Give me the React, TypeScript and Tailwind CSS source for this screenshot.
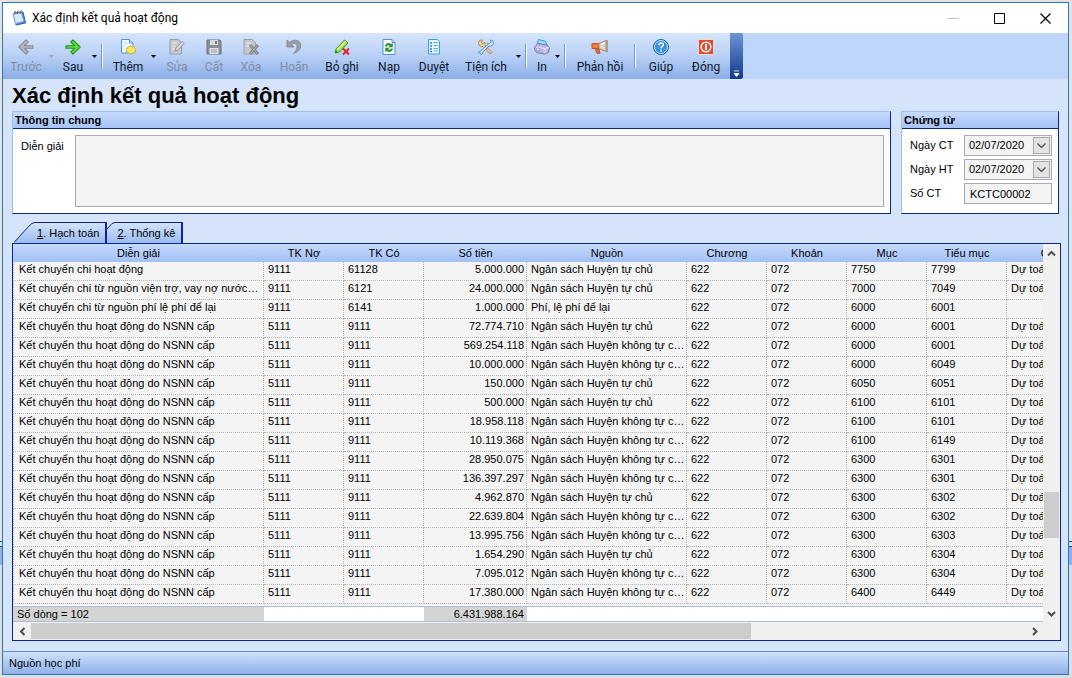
import { useState, type ReactNode } from "react"

type Tool =
  | { kind: "button"; label: string; icon: ReactNode; width: string; disabled?: boolean }
  | { kind: "menu"; label: string; disabled?: boolean }
  | { kind: "separator" }

function Arrow({ flip, fill, stroke }: { flip?: boolean; fill: string; stroke: string }) {
  return (
    <svg viewBox="0 0 18 18" className="size-[18px]">
      <path
        d="M2 7.700h8.500L6.800 4 9 1.800l7.200 7.200L9 16.200 6.800 14l3.700-3.700H2z"
        transform={flip ? "matrix(-1 0 0 1 18 0)" : undefined}
        fill={fill}
        stroke={stroke}
        strokeWidth="1.100"
        strokeLinejoin="round"
      />
    </svg>
  )
}

const icons = {
  add: (
    <svg viewBox="0 0 18 18" className="size-[18px]">
      <path d="M2.500 1.500h8l3.500 3.500v10h-11.500z" fill="#eef7ff" stroke="#4b97d8" />
      <path d="M10.500 1.500v3.500h3.500" fill="#b9dcf7" stroke="#4b97d8" />
      <path d="M4.500 5h4M4.500 8h2" stroke="#a9d4f5" />
      <path d="M9 9.500l2-1.500 2 .8 2-.3.5 1.700 1.500 1.300-1 1.700-.5 2-2-.2-2.500 1-1.500-1.500-2.500-.5.800-2-.8-1.500z" fill="#f7ea63" stroke="#c9a91c" strokeWidth=".9" />
    </svg>
  ),
  edit: (
    <svg viewBox="0 0 18 18" className="size-[18px]">
      <path d="M2 1.500h8l3.500 3v11.500h-11.500z" fill="#c6c9cf" stroke="#999da5" />
      <path d="M4 5h5M4 8h4M4 11h3" stroke="#eef0f4" />
      <path d="M7 13l1-3 6-6.500 2 2-6 6.500z" fill="#dcdde0" stroke="#92959b" />
    </svg>
  ),
  save: (
    <svg viewBox="0 0 18 18" className="size-[18px]">
      <path d="M2 2h13l1 1v13H2z" fill="#8b8f96" stroke="#6d7178" />
      <path d="M5 2h8v5H5z" fill="#d4d7dc" />
      <path d="M10 3h2v3h-2z" fill="#74787f" />
      <path d="M4.500 10h9v6h-9z" fill="#dfe1e5" />
      <path d="M6 12h6M6 14h6" stroke="#999da5" />
    </svg>
  ),
  remove: (
    <svg viewBox="0 0 18 18" className="size-[18px]">
      <path d="M2 1.500h8l3.500 3v11.500h-11.500z" fill="#c6c9cf" stroke="#999da5" />
      <path d="M4 5h5M4 8h3" stroke="#eef0f4" />
      <path d="M8 7l8 9M16 7l-8 9" stroke="#7e828a" strokeWidth="3" />
      <path d="M8.500 7.500l7 8M15.500 7.500l-7 8" stroke="#b7babf" />
    </svg>
  ),
  undo: (
    <svg viewBox="0 0 18 18" className="size-[18px]">
      <path d="M2 2v7h7L6.600 6.600C9 4.500 12 5.500 12 8.800c0 3-1.800 5-3.700 6.700 4.500-1.500 7.500-4 7.500-8C15.800 2 9 .500 4.500 4.300z" fill="#9b9fa7" stroke="#7f838b" strokeWidth=".8" />
    </svg>
  ),
  unpost: (
    <svg viewBox="0 0 18 18" className="size-[18px]">
      <path d="M2 15l1-4L11.500 2l3.500 3-8.500 9z" fill="#9be34a" stroke="#429b20" />
      <path d="M4.500 11.500l8-8" stroke="#e3ffc0" strokeWidth="1.300" />
      <path d="M2 15.500l1-3 1.800 1.800z" fill="#356b24" />
      <path d="M10 10.500l6 6M16 10.500l-6 6" stroke="#e0202b" strokeWidth="2" />
    </svg>
  ),
  reload: (
    <svg viewBox="0 0 18 18" className="size-[18px]">
      <path d="M3 1.500h9l3 3v12H3z" fill="#f7fbff" stroke="#5b8fce" />
      <path d="M12 1.500v3h3" fill="#c2dcf5" stroke="#5b8fce" />
      <path d="M5 8.500c.5-3.800 4.500-4.300 6.300-2.200L12.800 5v4.300H8.300l1.500-1.500c-1-1-2.400-.600-2.800.7z" fill="#279332" />
      <path d="M13 10.500c-.500 3.800-4.500 4.300-6.300 2.200L5.200 14V9.700h4.500l-1.500 1.500c1 1 2.400.600 2.800-.7z" fill="#279332" />
    </svg>
  ),
  browse: (
    <svg viewBox="0 0 18 18" className="size-[18px]">
      <path d="M3.500 1.500h9l2 2v12.500h-11z" fill="#e6f5ff" stroke="#419bdf" />
      <path d="M5 5h2M5 8h2M5 11h2M5 13.500h2" stroke="#2c80cc" strokeWidth="1.500" />
      <path d="M8.500 4.500h4.500M8.500 7.500h4.500M8.500 10.500h4.500M8.500 13h4.500" stroke="#58aee8" />
    </svg>
  ),
  tools: (
    <svg viewBox="0 0 18 18" className="size-[18px]">
      <path d="M1.500 5.500c-.5-2 1.500-4 4-3.500L4.300 4.500l1.400 1.300L8 4.500c.500 1.500-.3 2.500-.3 2.500l7.300 7.500-1.500 1.500L6 8.500c-2 .600-4-.700-4.500-3z" fill="#f2cf9c" stroke="#ae7d4b" strokeWidth=".9" />
      <path d="M16.500 5.500c.300-2-1-3.500-3-3.500l.500 2-1.500 1.500-2-.500c0 1 .3 1.500.3 1.500L3.500 13c-1.200 0-2 .8-2 2l1.800-.200.7 1.700c1.200 0 1.800-.900 1.700-2L12 8c2 .500 4-.500 4.500-2.500z" fill="#cbe6fa" stroke="#498dc7" strokeWidth=".9" />
    </svg>
  ),
  print: (
    <svg viewBox="0 0 18 18" className="size-[18px]">
      <path d="M4 6.500L5.500 1.500l7 1.800L14 7z" fill="#9fdcfa" stroke="#3d98d2" />
      <path d="M2 8.500l3-3 9 1.500 2.500 3-1 4.500-4 1.500-8-1.500-2-3z" fill="#bdb7e5" stroke="#7975b3" />
      <path d="M3 9l9 1.500 3.500-1M12 10.500v4.500" fill="none" stroke="#ece9ff" />
      <circle cx="5" cy="11.500" r="1.600" fill="#ece9fa" stroke="#7975b3" strokeWidth=".6" />
    </svg>
  ),
  feedback: (
    <svg viewBox="0 0 18 18" className="size-[18px]">
      <path d="M1 5.500h7v5H1z" fill="#f37a3b" stroke="#c8531d" />
      <path d="M4 10.500h4l1 5H6z" fill="#e36b2f" stroke="#b4501f" strokeWidth=".8" />
      <path d="M8 5.500L15 2.500v11l-7-3z" fill="#d8d3cb" stroke="#a88e75" />
      <path d="M10 6.500l4-2" stroke="#fff" />
      <path d="M15 2h2v12h-2z" fill="#b29c83" />
    </svg>
  ),
  help: (
    <svg viewBox="0 0 18 18" className="size-[18px]">
      <circle cx="9" cy="9" r="7.500" fill="#3a91dd" stroke="#1c5fa8" />
      <circle cx="9" cy="9" r="6.500" fill="none" stroke="#c5e5fb" strokeWidth="1" />
      <path d="M6.900 7.200c0-3.100 4.700-2.900 4.400-.3C11.100 8.400 9 8.400 9 10.400M9 11.800v1.600" fill="none" stroke="#fff" strokeWidth="1.500" />
    </svg>
  ),
  close: (
    <svg viewBox="0 0 18 18" className="size-[18px]">
      <path d="M1.500 1.500h15v15h-15z" fill="#df4b2d" stroke="#f4d6d2" />
      <circle cx="9" cy="9" r="4.800" fill="none" stroke="#fff" strokeWidth="1.500" />
      <path d="M9 6v6" stroke="#fff" strokeWidth="1.800" />
    </svg>
  ),
}

const tools: Tool[] = [
  { kind: "button", label: "Trước", icon: <Arrow flip fill="#b4b8c0" stroke="#858a94" />, width: "w-11", disabled: true },
  { kind: "menu", label: "Các bản ghi trước", disabled: true },
  { kind: "button", label: "Sau", icon: <Arrow fill="#61dc3a" stroke="#20951d" />, width: "w-9" },
  { kind: "menu", label: "Các bản ghi sau" },
  { kind: "separator" },
  { kind: "button", label: "Thêm", icon: icons.add, width: "w-11" },
  { kind: "menu", label: "Kiểu thêm" },
  { kind: "button", label: "Sửa", icon: icons.edit, width: "w-10", disabled: true },
  { kind: "button", label: "Cất", icon: icons.save, width: "w-[34px]", disabled: true },
  { kind: "button", label: "Xóa", icon: icons.remove, width: "w-10", disabled: true },
  { kind: "button", label: "Hoãn", icon: icons.undo, width: "w-[46px]", disabled: true },
  { kind: "button", label: "Bỏ ghi", icon: icons.unpost, width: "w-[50px]" },
  { kind: "button", label: "Nạp", icon: icons.reload, width: "w-11" },
  { kind: "button", label: "Duyệt", icon: icons.browse, width: "w-[46px]" },
  { kind: "button", label: "Tiện ích", icon: icons.tools, width: "w-[58px]" },
  { kind: "menu", label: "Các tiện ích" },
  { kind: "separator" },
  { kind: "button", label: "In", icon: icons.print, width: "w-6" },
  { kind: "menu", label: "Mẫu in" },
  { kind: "separator" },
  { kind: "button", label: "Phản hồi", icon: icons.feedback, width: "w-[62px]" },
  { kind: "separator" },
  { kind: "button", label: "Giúp", icon: icons.help, width: "w-11" },
  { kind: "button", label: "Đóng", icon: icons.close, width: "w-[46px]" },
]

const columns = [
  { title: "Diễn giải", width: "w-[251px]" },
  { title: "TK Nợ", width: "w-20" },
  { title: "TK Có", width: "w-20" },
  { title: "Số tiền", width: "w-[103px]" },
  { title: "Nguồn", width: "w-40" },
  { title: "Chương", width: "w-20" },
  { title: "Khoản", width: "w-20" },
  { title: "Mục", width: "w-20" },
  { title: "Tiểu mục", width: "w-20" },
  { title: "Cấp phát", width: "w-28" },
]

const thu = "Kết chuyển thu hoạt động do NSNN cấp"
const tuChu = "Ngân sách Huyện tự chủ"
const khongTuChu = "Ngân sách Huyện không tự chủ"

// description, debit, credit, amount, source, item, sub-item, allocation
const entries = [
  ["Kết chuyển chi hoạt động", "9111", "61128", "5.000.000", tuChu, "7750", "7799", "Dự toán"],
  ["Kết chuyển chi từ nguồn viện trợ, vay nợ nước ngoài", "9111", "6121", "24.000.000", tuChu, "7000", "7049", "Dự toán"],
  ["Kết chuyển chi từ nguồn phí lệ phí để lại", "9111", "6141", "1.000.000", "Phí, lệ phí để lại", "6000", "6001", ""],
  [thu, "5111", "9111", "72.774.710", tuChu, "6000", "6001", "Dự toán"],
  [thu, "5111", "9111", "569.254.118", khongTuChu, "6000", "6001", "Dự toán"],
  [thu, "5111", "9111", "10.000.000", khongTuChu, "6000", "6049", "Dự toán"],
  [thu, "5111", "9111", "150.000", tuChu, "6050", "6051", "Dự toán"],
  [thu, "5111", "9111", "500.000", tuChu, "6100", "6101", "Dự toán"],
  [thu, "5111", "9111", "18.958.118", khongTuChu, "6100", "6101", "Dự toán"],
  [thu, "5111", "9111", "10.119.368", khongTuChu, "6100", "6149", "Dự toán"],
  [thu, "5111", "9111", "28.950.075", khongTuChu, "6300", "6301", "Dự toán"],
  [thu, "5111", "9111", "136.397.297", khongTuChu, "6300", "6301", "Dự toán"],
  [thu, "5111", "9111", "4.962.870", tuChu, "6300", "6302", "Dự toán"],
  [thu, "5111", "9111", "22.639.804", khongTuChu, "6300", "6302", "Dự toán"],
  [thu, "5111", "9111", "13.995.756", khongTuChu, "6300", "6303", "Dự toán"],
  [thu, "5111", "9111", "1.654.290", tuChu, "6300", "6304", "Dự toán"],
  [thu, "5111", "9111", "7.095.012", khongTuChu, "6300", "6304", "Dự toán"],
  [thu, "5111", "9111", "17.380.000", khongTuChu, "6400", "6449", "Dự toán"],
]

function TitleBar() {
  return (
    <header className="flex h-[30px] items-center bg-white pl-2 font-[Roboto,sans-serif] text-xs">
      <svg viewBox="0 0 16 16" className="mr-[5px] size-4">
        <path d="M3 3l9-1 2.500 11-9.500 2z" fill="#5c86d6" stroke="#395eae" />
        <path d="M2 4l8.500-1.500 2.500 9-8.500 2z" fill="#d7ebff" stroke="#6798dd" />
        <path d="M2 4l2 8 2 1.500-1.500 1z" fill="#7bc5e8" />
        <path d="M3.500 4.500V2c0-1 1.500-1 1.500 0v2M6.500 4V1.500c0-1 1.500-1 1.500 0v2M9.500 3.500V1.300c0-1 1.500-1 1.500 0v2" fill="none" stroke="#666" strokeWidth=".8" />
      </svg>
      <span className="flex-1">Xác định kết quả hoạt động</span>
      <button aria-label="Thu nhỏ" className="flex h-full w-[46px] items-center justify-center">
        <svg viewBox="0 0 11 11" className="size-[11px]"><path d="M0 5.500h11" stroke="#bdbdbd" /></svg>
      </button>
      <button aria-label="Phóng to" className="flex h-full w-[46px] items-center justify-center">
        <svg viewBox="0 0 11 11" className="size-[11px]"><path d="M.5.500h10v10H.5z" fill="none" stroke="#000" /></svg>
      </button>
      <button aria-label="Đóng cửa sổ" className="flex h-full w-[46px] items-center justify-center">
        <svg viewBox="0 0 11 11" className="size-[11px]"><path d="M.5.500l10 10M10.500.500l-10 10" stroke="#000" strokeWidth="1.200" /></svg>
      </button>
    </header>
  )
}

function Toolbar() {
  return (
    <div className="flex h-[46px] bg-[#bdd6f9] font-[Roboto,sans-serif] text-xs">
      <div role="toolbar" className="flex bg-linear-to-b from-[#d6e5fc] via-[#b9d0f6] to-[#8bade6] px-px">
        {tools.map((tool, i) => {
          if (tool.kind === "separator") {
            return (
              <div key={i} className="flex w-2 items-center justify-center">
                <span className="h-6 w-0.5 border-l border-[#7096d3] bg-white" />
              </div>
            )
          }
          if (tool.kind === "menu") {
            return (
              <button key={i} aria-label={tool.label} disabled={tool.disabled} className="flex w-[7px] items-center justify-center">
                <svg viewBox="0 0 5 3" className="h-[3px] w-[5px]">
                  <path d="M0 0h5L2.500 3z" fill={tool.disabled ? "#9aa6bd" : "#000"} />
                </svg>
              </button>
            )
          }
          return (
            <button
              key={i}
              disabled={tool.disabled}
              className={`flex flex-col items-center pt-[5px] whitespace-nowrap ${tool.width} ${tool.disabled ? "text-[#7f8da8]" : "text-[#101828]"}`}
            >
              {tool.icon}
              <span className="mt-0.5 leading-[18px]">{tool.label}</span>
            </button>
          )
        })}
      </div>
      <button aria-label="Tùy chọn thanh công cụ" className="flex w-[13px] items-end justify-center rounded-r-xs bg-linear-to-b from-[#6d95d8] to-[#13398b] pb-0.5">
        <svg viewBox="0 0 7 7" className="size-[7px]">
          <path d="M1 1h5M1 3.500h5L3.500 6.500z" fill="#fff" stroke="#fff" strokeWidth=".8" />
        </svg>
      </button>
    </div>
  )
}

function Panel({ title, className, children }: { title: string; className: string; children: ReactNode }) {
  return (
    <section className={`flex flex-col border border-t-[#a3bfee] border-r-[#0a2a80] border-b-[#0a2a80] border-l-[#a3bfee] bg-white ${className}`}>
      <h2 className="h-[17px] border-b border-[#0a2a80] bg-linear-to-b from-[#c6dafc] to-[#a6c3f5] px-0.5 leading-4 font-bold">
        {title}
      </h2>
      {children}
    </section>
  )
}

function DateField({ id, label, value }: { id: string; label: string; value: string }) {
  return (
    <div className="flex items-center">
      <label htmlFor={id} className="w-[54px]">{label}</label>
      <div className="flex h-[21px] flex-1 border border-[#a9abb2] bg-[#f4f4f4] p-px">
        <input id={id} defaultValue={value} className="w-0 flex-1 pl-[3px] outline-none" />
        <button aria-label={`Chọn ${label}`} className="flex w-[17px] items-center justify-center border border-[#a9a9a9] bg-[#e3e3e3]">
          <svg viewBox="0 0 9 5" className="h-[5px] w-[9px]"><path d="M.5.500l4 4 4-4" fill="none" stroke="#505050" strokeWidth="1.300" /></svg>
        </button>
      </div>
    </div>
  )
}

function Tab({ hotkey, label, active, onSelect }: { hotkey: string; label: string; active: boolean; onSelect: () => void }) {
  return (
    <button role="tab" aria-selected={active} onClick={onSelect} className="flex h-[21px] items-stretch">
      {active ? (
        <svg viewBox="0 0 21 21" className="h-[21px] w-[21px]">
          <defs>
            <linearGradient id="tab-fill" x1="0" y1="0" x2="0" y2="1">
              <stop offset="0" stopColor="#d3e3fd" />
              <stop offset="1" stopColor="#9bbbee" />
            </linearGradient>
          </defs>
          <path d="M0 21L15 4Q18 .5 21 .5V21z" fill="url(#tab-fill)" />
          <path d="M0 20.500L15 4Q18 .5 21 .5" fill="none" stroke="#10277a" />
        </svg>
      ) : (
        <svg viewBox="0 0 8 21" className="h-[21px] w-2">
          <defs>
            <linearGradient id="tab-fill-back" x1="0" y1="0" x2="0" y2="1">
              <stop offset="0" stopColor="#d3e3fd" />
              <stop offset="1" stopColor="#9bbbee" />
            </linearGradient>
          </defs>
          <path d="M0 7L5 1.500 8 .5V21H0z" fill="url(#tab-fill-back)" />
          <path d="M0 7L5 1.500 8 .5" fill="none" stroke="#10277a" />
        </svg>
      )}
      <span className="border-t border-r-2 border-t-[#10277a] border-r-[#1420a8] bg-linear-to-b from-[#d3e3fd] to-[#9bbbee] pr-1.5 pl-0.5 leading-[20px]">
        <u>{hotkey}</u>. {label}
      </span>
    </button>
  )
}

function Chevron({ d }: { d: string }) {
  return (
    <svg viewBox="0 0 9 9" className="size-[9px]">
      <path d={d} fill="none" stroke="#505050" strokeWidth="2" />
    </svg>
  )
}

function EntryTable() {
  const cell = "truncate border-r border-b border-dotted border-[#b4b4b4] py-0 align-top leading-[15px]"

  return (
    <div className="border border-[#0a2a80] bg-[#f0f0f0]">
      <div className="flex">
        <div className="min-w-0 flex-1 overflow-hidden">
          <table className="w-[1106px] table-fixed border-separate border-spacing-0">
            <thead>
              <tr className="h-[18px] bg-linear-to-b from-[#c6dafc] to-[#a3c0f5]">
                {columns.map((column) => (
                  <th key={column.title} className={`p-0 text-center leading-[18px] font-normal ${column.width}`}>
                    {column.title}
                  </th>
                ))}
              </tr>
            </thead>
            <tbody className="bg-[#f4f4f4]">
              {entries.map(([description, debit, credit, amount, source, item, subItem, allocation], i) => (
                <tr key={i} className="h-[19px]">
                  <td className={`${cell} border-l pr-0.5 pl-[5px]`}>{description}</td>
                  <td className={`${cell} pl-1`}>{debit}</td>
                  <td className={`${cell} pl-1`}>{credit}</td>
                  <td className={`${cell} pr-0.5 text-right`}>{amount}</td>
                  <td className={`${cell} pr-px pl-1`}>{source}</td>
                  <td className={`${cell} pl-1`}>622</td>
                  <td className={`${cell} pl-1`}>072</td>
                  <td className={`${cell} pl-1`}>{item}</td>
                  <td className={`${cell} pl-1`}>{subItem}</td>
                  <td className={`${cell} pl-1`}>{allocation}</td>
                </tr>
              ))}
            </tbody>
            <tfoot className="bg-white">
              <tr className="h-0.5 bg-[#f4f4f4]">
                <td colSpan={10} className="p-0" />
              </tr>
              <tr className="h-4 leading-[14px]">
                <td className="border-y border-[#aabfd3] bg-[#d4d4d4] px-1 py-0">Số dòng = 102</td>
                <td colSpan={2} className="border-y border-[#aabfd3] p-0" />
                <td className="border-y border-[#aabfd3] bg-[#d4d4d4] py-0 pr-[3px] pl-0 text-right">6.431.988.164</td>
                <td colSpan={6} className="border-y border-[#aabfd3] p-0" />
              </tr>
            </tfoot>
          </table>
        </div>
        <div className="flex w-[17px] flex-col">
          <button aria-label="Cuộn lên" className="flex h-[18px] items-center justify-center"><Chevron d="M1 6.500l3.500-3.500L8 6.500" /></button>
          <span className="grow-[230]" />
          <span className="mx-px h-[46px] bg-[#cdcdcd]" />
          <span className="grow-[67]" />
          <button aria-label="Cuộn xuống" className="flex h-[17px] items-center justify-center"><Chevron d="M1 3l3.500 3.500L8 3" /></button>
        </div>
      </div>
      <div className="flex h-[18px] pr-[17px]">
        <button aria-label="Cuộn trái" className="flex w-[18px] items-center justify-center"><Chevron d="M6.500 1L3 4.500 6.500 8" /></button>
        <div className="flex-1 py-px">
          <div className="h-full w-[72.4%] bg-[#cdcdcd]" />
        </div>
        <button aria-label="Cuộn phải" className="flex w-[18px] items-center justify-center"><Chevron d="M3 1l3.500 3.500L3 8" /></button>
      </div>
    </div>
  )
}

export default function App() {
  const [tab, setTab] = useState(1)

  return (
    <div className="flex min-h-screen flex-col bg-[linear-gradient(#e2e3e6_0_541px,#1f4f91_541px_542px,#d6e4f9_542px_546px,#1f4f91_546px_547px,#8fb3e6_547px_565px,#dcdee2_565px)] pt-0.5 pr-[3px] pb-[3px] pl-0.5 font-['Liberation_Sans',sans-serif] text-[11px] text-black">
      <div className="flex flex-1 flex-col border border-[#2a7ab8] bg-[#d6e4f9]">
        <TitleBar />
        <Toolbar />

        <main className="flex flex-col pr-[7px] pl-[9px]">
          <h1 className="h-8 text-[22px] leading-[34px] font-bold">Xác định kết quả hoạt động</h1>

          <div className="flex gap-2.5 pr-0.5">
            <Panel title="Thông tin chung" className="flex-1">
              <div className="flex flex-1 p-1.5 pl-2">
                <label htmlFor="description" className="w-[54px] pt-1 leading-[15px]">Diễn giải</label>
                <textarea id="description" className="h-[72px] flex-1 resize-none border border-[#a9abb2] bg-[#f4f4f4] outline-none" />
              </div>
            </Panel>
            <Panel title="Chứng từ" className="w-[158px]">
              <div className="flex flex-col gap-[3px] px-1.5 pt-1.5 pl-2">
                <DateField id="voucher-date" label="Ngày CT" value="02/07/2020" />
                <DateField id="posting-date" label="Ngày HT" value="02/07/2020" />
                <div className="flex items-center">
                  <label htmlFor="voucher-no" className="w-[54px]">Số CT</label>
                  <input id="voucher-no" defaultValue="KCTC00002" className="h-[21px] w-0 flex-1 border border-[#a9abb2] bg-[#f4f4f4] pl-[5px] outline-none" />
                </div>
              </div>
            </Panel>
          </div>

          <div role="tablist" className="mt-2 flex pl-0.5">
            <Tab hotkey="1" label="Hạch toán" active={tab === 1} onSelect={() => setTab(1)} />
            <Tab hotkey="2" label="Thống kê" active={tab === 2} onSelect={() => setTab(2)} />
          </div>
          <EntryTable />
        </main>

        <footer className="mt-auto h-[23px] border-t border-[#5f8fca] bg-linear-to-b from-[#d0e1fc] to-[#8fb2ea] px-1.5 leading-[22px]">
          Nguồn học phí
        </footer>
      </div>
    </div>
  )
}
